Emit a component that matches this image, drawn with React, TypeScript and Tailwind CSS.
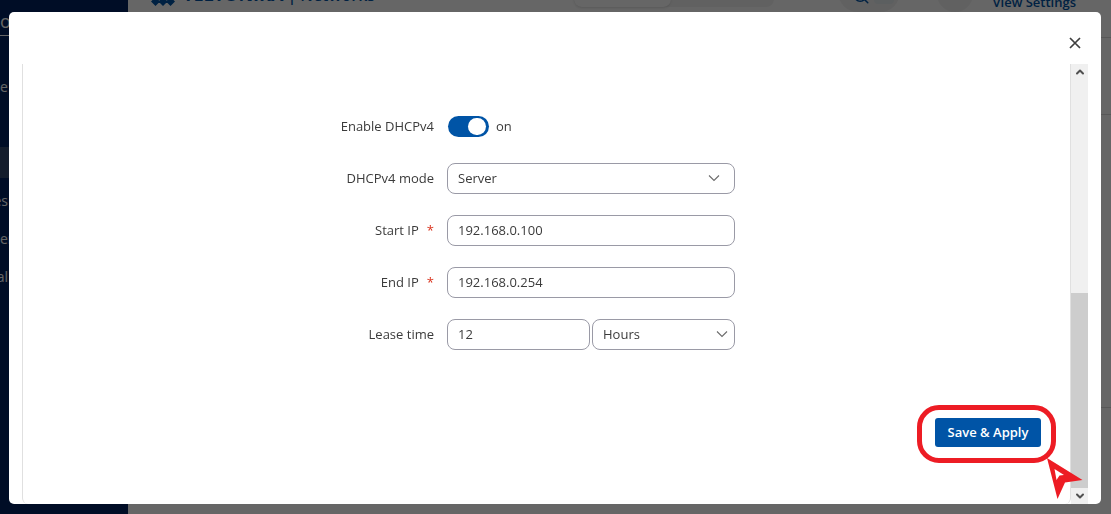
import React, { useState } from "react";
import { ChevronDown, ChevronUp, Search } from "lucide-react";

const fieldClass =
  "h-[31px] w-full rounded-lg border border-[#9a9aa6] bg-white px-[10px] pb-[2px] text-[13px] text-[#3b3b3b] focus:outline-none focus:border-[#0054a6]";

interface FormRowProps {
  label: string;
  htmlFor: string;
  required?: boolean;
  children: React.ReactNode;
}

function FormRow({ label, htmlFor, required, children }: FormRowProps) {
  return (
    <div className="grid min-h-[31px] grid-cols-[424fr_623fr] items-center">
      <label htmlFor={htmlFor} className="pr-[13px] pb-[2px] text-right">
        {label}
        {required && <span className="ml-2 text-[#d9301a]">*</span>}
      </label>
      <div className="flex w-[288px] items-center gap-[2px]">{children}</div>
    </div>
  );
}

interface SelectFieldProps {
  id: string;
  label?: string;
  value: string;
  options: string[];
  chevronClass: string;
  onChange: (value: string) => void;
}

function SelectField({ id, label, value, options, chevronClass, onChange }: SelectFieldProps) {
  return (
    <div className="relative flex-1">
      <select
        id={id}
        aria-label={label}
        value={value}
        onChange={(e) => onChange(e.target.value)}
        className={`${fieldClass} appearance-none`}
      >
        {options.map((option) => (
          <option key={option}>{option}</option>
        ))}
      </select>
      <svg
        viewBox="0 0 12 8"
        className={`pointer-events-none absolute top-[11px] h-2 w-3 ${chevronClass}`}
        fill="none"
        stroke="#6b6b6b"
        strokeWidth="1.100"
      >
        <path d="M1 1.500 6 6.500 11 1.500" />
      </svg>
    </div>
  );
}

function Logo() {
  return (
    <div className="flex items-center text-[#0054a6]">
      <svg viewBox="0 0 28 28" className="h-7 w-7" fill="currentColor">
        {/* rows of diamonds */}
        <path d="M14 0l4 4-4 4-4-4zM6 8l4 4-4 4-4-4zM14 8l4 4-4 4-4-4zM22 8l4 4-4 4-4-4zM2 14l4 4-4 4-4-4zM10 14l4 4-4 4-4-4zM18 14l4 4-4 4-4-4zM26 14l4 4-4 4-4-4zM6.500 19l4.500 4.500-4.500 4.500-4.500-4.500zM14 19l4.500 4.500-4.500 4.500-4.500-4.500zM21.500 19l4.500 4.500-4.500 4.500-4.500-4.500z" />
      </svg>
      <div className="ml-[6px] flex items-baseline gap-1 pt-1 leading-6">
        <span className="text-[18px] font-bold">TELTONIKA</span>
        <span className="text-[16px] font-semibold">| Networks</span>
      </div>
    </div>
  );
}

// Page behind the modal, scrolled down a little
function Backdrop() {
  const menu = [
    { text: "e", align: "justify-start" },
    { text: "", align: "justify-start" },
    { text: "", align: "justify-start", active: true },
    { text: "es", align: "justify-end" },
    { text: "er", align: "justify-start" },
    { text: "al", align: "justify-end" },
  ];

  return (
    <div className="-mt-[53px] flex h-[calc(100vh+53px)]" aria-hidden="true">
      <aside className="w-32 shrink-0 bg-[#00215f] text-[14px] text-white">
        <div className="flex h-[89px] items-end border-b border-white text-lg">o</div>
        <div className="flex flex-col gap-[7px] pt-[35px]">
          {menu.map((item, i) => (
            <div key={i} className={`h-[31px] ${item.active ? "bg-[#33496f]" : ""}`}>
              <span className={`flex h-full w-2 items-center ${item.align}`}>{item.text}</span>
            </div>
          ))}
        </div>
      </aside>
      <main className="flex-1">
        <header className="flex h-[91px] items-center border-b border-[#dadada] pl-[21px] pr-[35px]">
          <Logo />
          <div className="ml-auto flex h-[30px] w-[200px] rounded-lg bg-[#f3f3f3]">
            <div className="w-[97px] rounded-lg bg-white shadow" />
          </div>
          <div className="ml-[64px] flex h-10 w-[62px] items-center gap-1 rounded-full bg-[#f3f3f3] pl-[14px]">
            <Search size={18} className="mt-2 text-[#0054a6]" />
            <span className="h-6 w-5 rounded bg-[#e6edf0]" />
          </div>
          <div className="ml-[37px] h-10 w-9 rounded-full bg-[#f3f3f3]" />
          <div className="ml-[19px] text-[13px] leading-5 font-semibold text-[#0054a6]">
            <p>User mode</p>
            <p>View Settings</p>
          </div>
        </header>
        <div className="h-[77px] border-b border-[#dadada]" />
        <div className="h-[293px] border-b border-[#dadada]" />
      </main>
    </div>
  );
}

export default function App() {
  const [enabled, setEnabled] = useState(true);
  const [mode, setMode] = useState("Server");
  const [startIp, setStartIp] = useState("192.168.0.100");
  const [endIp, setEndIp] = useState("192.168.0.254");
  const [leaseTime, setLeaseTime] = useState("12");
  const [leaseUnit, setLeaseUnit] = useState("Hours");

  return (
    <div className="relative h-screen overflow-hidden bg-white font-['Open_Sans',sans-serif] text-[13px] leading-5 text-[#3b3b3b]">
      <Backdrop />

      <div className="fixed inset-0 flex bg-black/60 pt-3 pr-[10px] pb-[10px] pl-[9px]">
        <div
          role="dialog"
          aria-label="DHCPv4 server"
          className="flex flex-1 flex-col overflow-hidden rounded-[5px] bg-white pr-[13px] pl-[13px]"
        >
          <div className="flex h-[52px] shrink-0 justify-end pt-[21px]">
            <button type="button" aria-label="Close" className="mr-[3px] h-5 w-5 cursor-pointer p-1">
              <svg viewBox="0 0 12 12" className="h-3 w-3" fill="none" stroke="#3f3f3f" strokeWidth="1.700">
                <path d="M1 1 11 11M11 1 1 11" />
              </svg>
            </button>
          </div>

          <div className="flex min-h-0 flex-1">
            <form
              className="flex flex-1 flex-col gap-[21px] rounded-b-md border-x border-[#e0e0e0] pt-[47px]"
              onSubmit={(e) => e.preventDefault()}
            >
              <FormRow label="Enable DHCPv4" htmlFor="enable">
                <input
                  id="enable"
                  type="checkbox"
                  role="switch"
                  checked={enabled}
                  onChange={(e) => setEnabled(e.target.checked)}
                  className="ml-px h-[21px] w-[41px] cursor-pointer appearance-none rounded-full bg-[#a0a0a8] p-[2px] before:block before:h-[17px] before:w-[18px] before:rounded-full before:bg-white checked:bg-[#0054a6] checked:before:ml-[18px]"
                />
                <span className="ml-[5px] pb-[2px]">{enabled ? "on" : "off"}</span>
              </FormRow>

              <FormRow label="DHCPv4 mode" htmlFor="mode">
                <SelectField
                  id="mode"
                  value={mode}
                  options={["Server", "Relay"]}
                  chevronClass="right-[15px]"
                  onChange={setMode}
                />
              </FormRow>

              <FormRow label="Start IP" htmlFor="startIp" required>
                <input
                  id="startIp"
                  type="text"
                  value={startIp}
                  onChange={(e) => setStartIp(e.target.value)}
                  className={fieldClass}
                />
              </FormRow>

              <FormRow label="End IP" htmlFor="endIp" required>
                <input
                  id="endIp"
                  type="text"
                  value={endIp}
                  onChange={(e) => setEndIp(e.target.value)}
                  className={fieldClass}
                />
              </FormRow>

              <FormRow label="Lease time" htmlFor="leaseTime">
                <div className="flex-1">
                  <input
                    id="leaseTime"
                    type="text"
                    value={leaseTime}
                    onChange={(e) => setLeaseTime(e.target.value)}
                    className={fieldClass}
                  />
                </div>
                <SelectField
                  id="leaseUnit"
                  label="Lease time unit"
                  value={leaseUnit}
                  options={["Hours", "Minutes", "Seconds"]}
                  chevronClass="right-[7px]"
                  onChange={setLeaseUnit}
                />
              </FormRow>

              <div className="flex justify-end pt-[47px] pr-[29px]">
                <div className="relative">
                  <button
                    type="submit"
                    className="block h-[29px] w-[106px] cursor-pointer rounded-[3px] bg-[#0054a6] pb-[2px] font-semibold text-white"
                  >
                    Save &amp; Apply
                  </button>
                  {/* highlight ring and pointer */}
                  <div className="pointer-events-none absolute -top-[13px] -right-[15px] -bottom-4 -left-[18px] rounded-[22px] border-[5px] border-[#ed1c24]" />
                  <svg
                    viewBox="0 0 36 42"
                    className="pointer-events-none absolute top-[40px] -right-[42px] z-10 h-[42px] w-9"
                  >
                    <path d="M0 0 35.500 22 18 24.500 10.500 41z" fill="#ed1c24" />
                    <path d="M7.500 11 17 17 12.500 17.500 9.500 22z" fill="#fff" />
                  </svg>
                </div>
              </div>
            </form>

            {/* scrollbar */}
            <div className="flex w-[17px] flex-col bg-[#f0f0f0]">
              <div className="flex h-4 items-center justify-center">
                <ChevronUp size={12} strokeWidth={4} color="#505050" />
              </div>
              <div className="flex-[213]" />
              <div className="flex-[195] bg-[#cdcdcd]" />
              <div className="flex h-4 items-center justify-center">
                <ChevronDown size={12} strokeWidth={4} color="#505050" />
              </div>
            </div>
          </div>
        </div>
      </div>
    </div>
  );
}
